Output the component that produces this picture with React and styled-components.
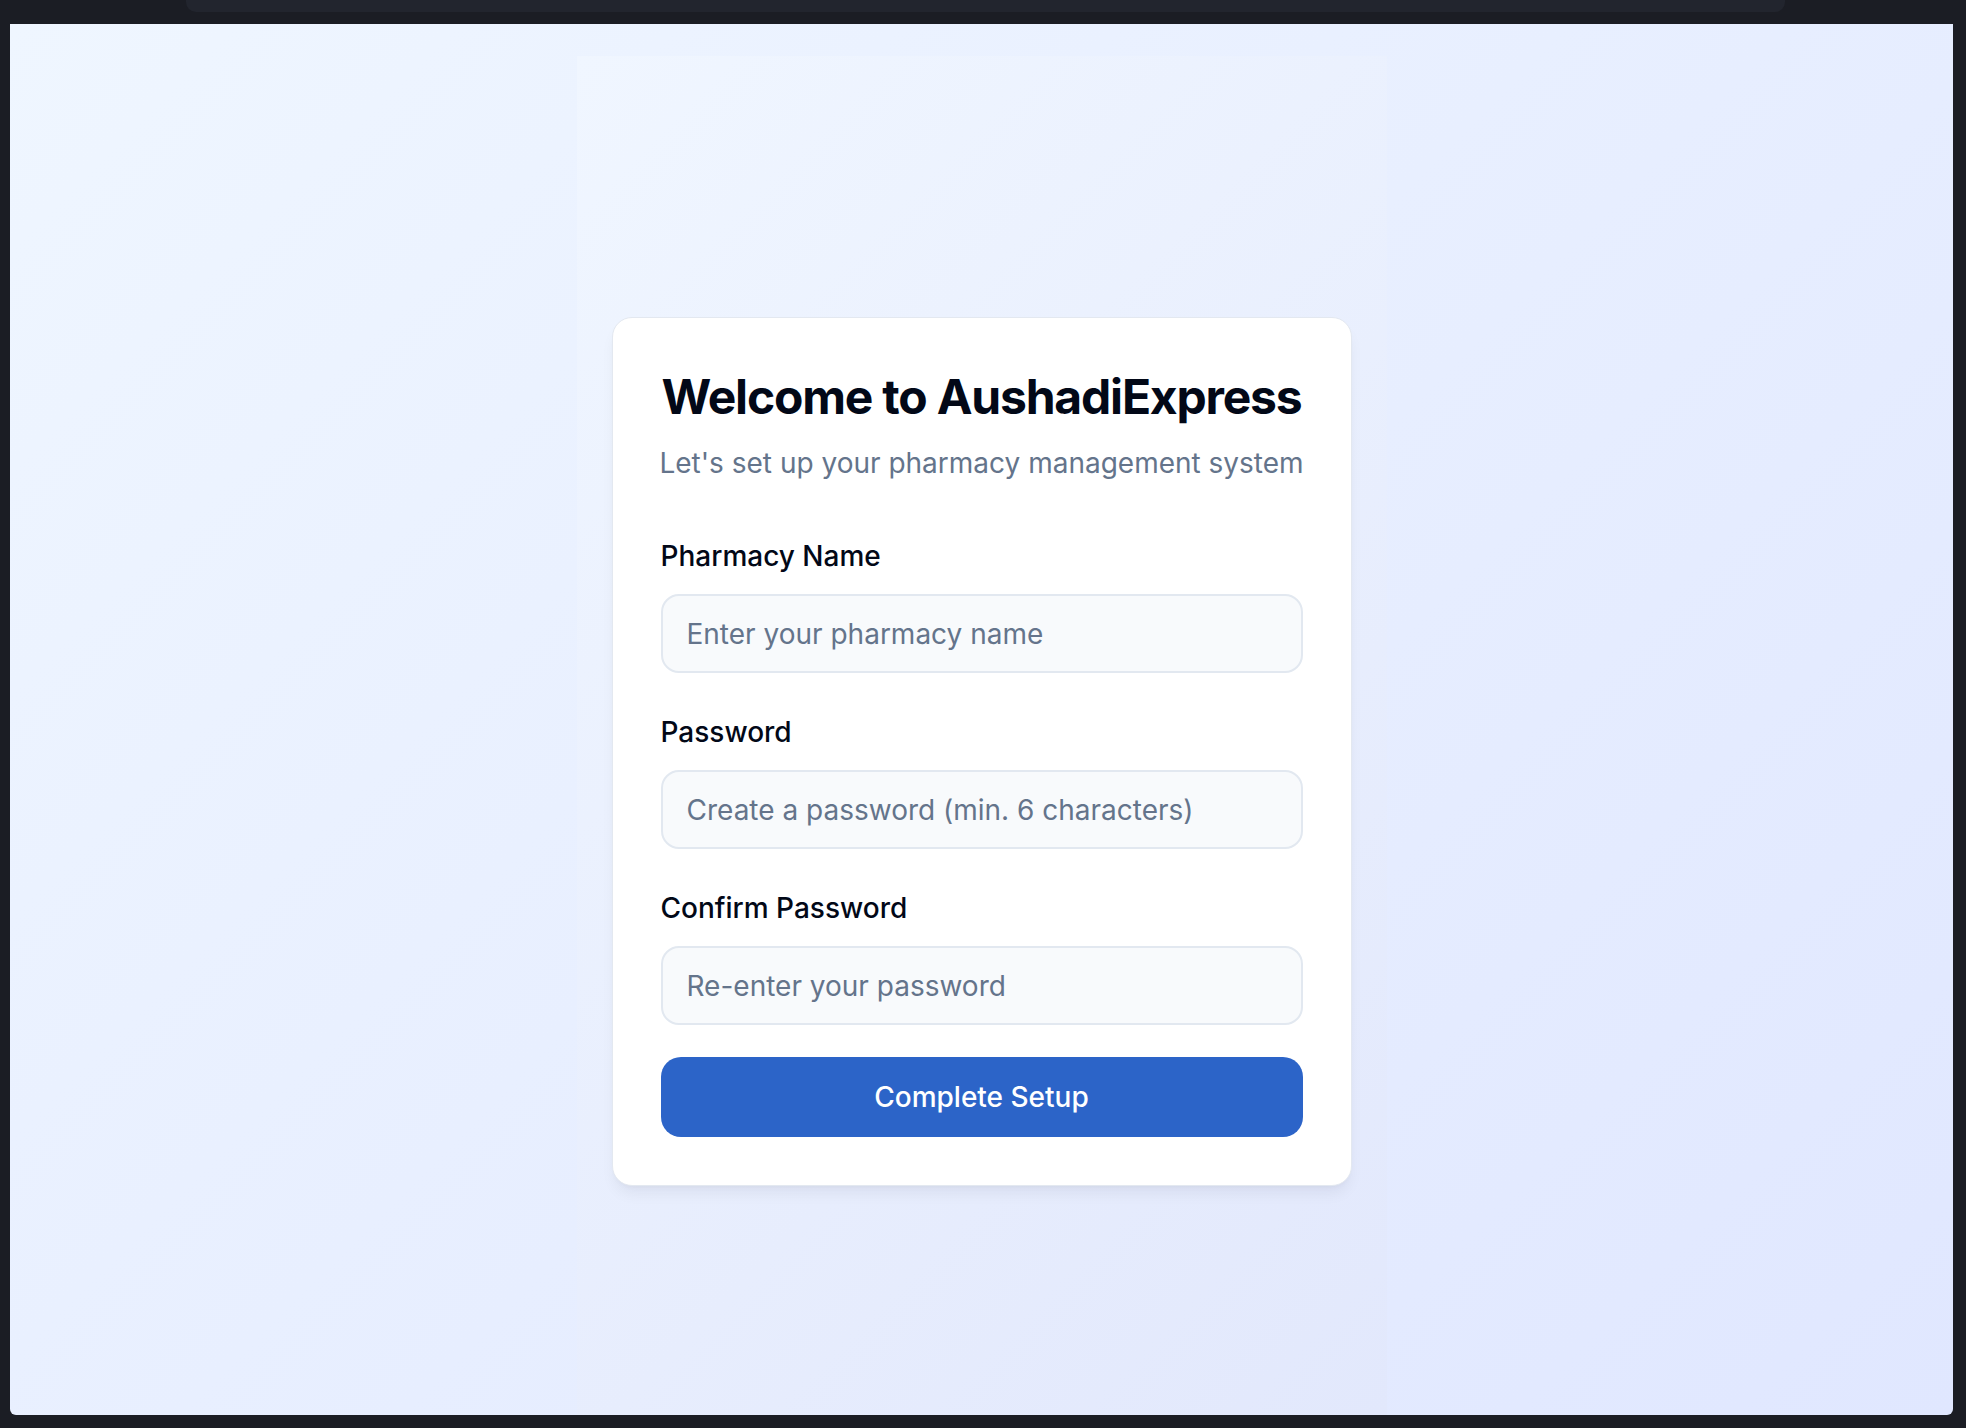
import styled, { createGlobalStyle } from "styled-components";

const GlobalStyle = createGlobalStyle`
  * {
    box-sizing: border-box;
  }
  html,
  body {
    margin: 0;
    padding: 0;
    height: 100%;
    background: #1b1d24;
    font-family: Inter, "Noto Sans", "Liberation Sans", sans-serif;
  }
  #root {
    height: 100%;
  }
`;

export default function App() {
  return (
    <>
      <GlobalStyle />
      <Window>
        <TopBar>
          <UrlBar />
        </TopBar>
        <PageArea>
          <Panel>
            <Card>
              <Title>Welcome to AushadiExpress</Title>
              <Subtitle>Let's set up your pharmacy management system</Subtitle>
              <Form onSubmit={(e) => e.preventDefault()}>
                <Field>
                  <Label htmlFor="pharmacy">Pharmacy Name</Label>
                  <Input id="pharmacy" placeholder="Enter your pharmacy name" />
                </Field>
                <Field>
                  <Label htmlFor="password">Password</Label>
                  <Input
                    id="password"
                    type="password"
                    placeholder="Create a password (min. 6 characters)"
                  />
                </Field>
                <Field>
                  <Label htmlFor="confirm">Confirm Password</Label>
                  <Input
                    id="confirm"
                    type="password"
                    placeholder="Re-enter your password"
                  />
                </Field>
                <SubmitButton type="submit">Complete Setup</SubmitButton>
              </Form>
            </Card>
          </Panel>
        </PageArea>
      </Window>
    </>
  );
}

const Window = styled.div`
  height: 100%;
  display: flex;
  flex-direction: column;
  padding: 0 13px 13px 10px;
`;

const TopBar = styled.div`
  height: 24px;
  flex-shrink: 0;
  display: flex;
  padding-left: 176px;
  padding-right: 168px;
`;

const UrlBar = styled.div`
  flex: 1;
  height: 12px;
  background: #22252e;
  border-radius: 0 0 10px 10px;
`;

const PageArea = styled.main`
  flex: 1;
  display: flex;
  justify-content: center;
  overflow: hidden;
  border-radius: 0 0 6px 6px;
  background: linear-gradient(135deg, #eff6ff 0%, #e0e7ff 100%);
`;

const Panel = styled.div`
  width: 810px;
  margin-top: 32px;
  padding-top: 261px;
  display: flex;
  justify-content: center;
  align-items: flex-start;
  background: linear-gradient(135deg, #f0f6ff 0%, #e2e8fc 100%);
`;

const Card = styled.div`
  width: 740px;
  padding: 48px;
  background: #ffffff;
  border: 1px solid #e3e8f0;
  border-radius: 20px;
  box-shadow: 0 10px 15px -3px rgba(15, 23, 42, 0.06),
    0 4px 6px -4px rgba(15, 23, 42, 0.05);
`;

const Title = styled.h1`
  margin: 0;
  font-size: 48px;
  line-height: 62px;
  font-weight: 700;
  letter-spacing: -0.025em;
  white-space: nowrap;
  color: #020817;
  text-align: center;
`;

const Subtitle = styled.p`
  margin: 15px -4px 0;
  font-size: 28px;
  line-height: 40px;
  white-space: nowrap;
  color: #64748b;
  text-align: center;
`;

const Form = styled.form`
  margin-top: 55px;
  display: flex;
  flex-direction: column;
`;

const Field = styled.div`
  display: flex;
  flex-direction: column;
  gap: 20px;
  margin-bottom: 41px;

  &:nth-last-of-type(1) {
    margin-bottom: 32px;
  }
`;

const Label = styled.label`
  font-size: 28px;
  line-height: 36px;
  font-weight: 500;
  color: #020817;
`;

const Input = styled.input`
  width: 100%;
  height: 79px;
  padding: 0 24px;
  font-family: inherit;
  font-size: 28px;
  color: #020817;
  background: #f8fafc;
  border: 2px solid #e2e8f0;
  border-radius: 18px;
  outline: none;

  &::placeholder {
    color: #64748b;
  }
`;

const SubmitButton = styled.button`
  height: 80px;
  width: 100%;
  border: none;
  border-radius: 20px;
  background: #2c64c8;
  color: #ffffff;
  font-family: inherit;
  font-size: 28px;
  font-weight: 500;
  cursor: pointer;
`;
